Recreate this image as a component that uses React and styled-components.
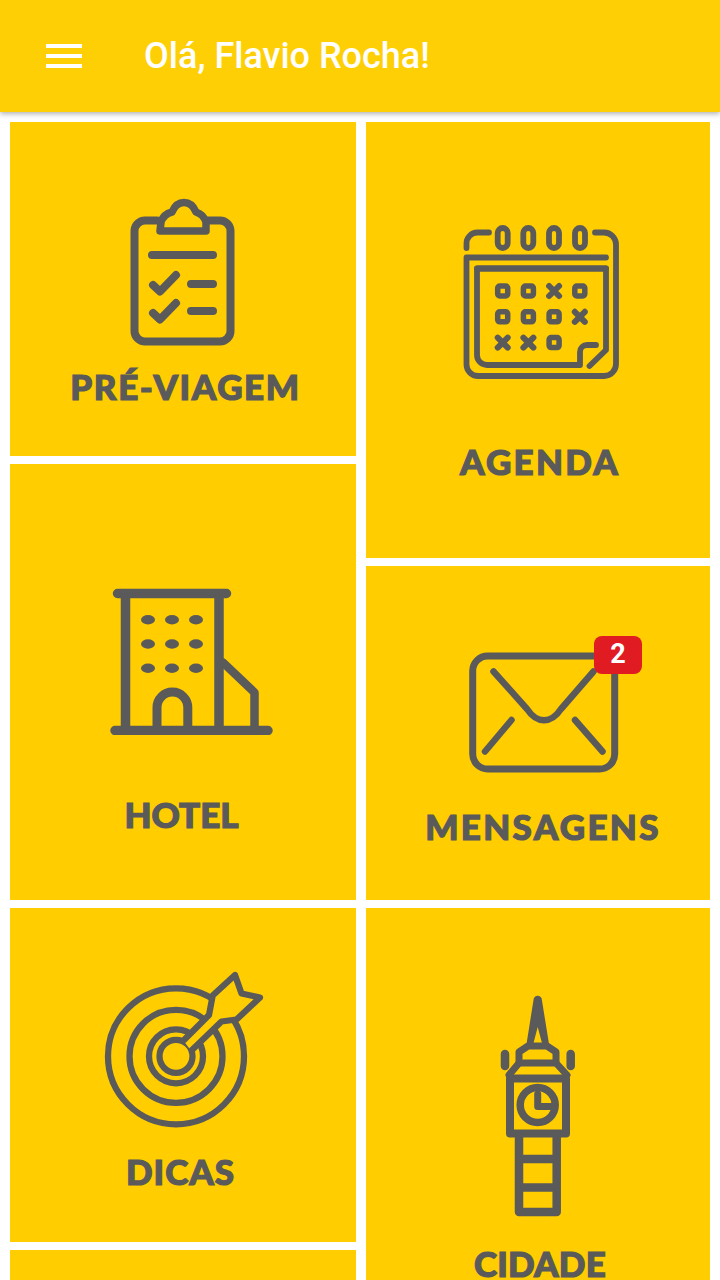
import React from "react";
import styled, { createGlobalStyle } from "styled-components";

const GlobalStyle = createGlobalStyle`
  html, body {
    margin: 0;
    background: #fff;
  }
`;

const Page = styled.div`
  width: 720px;
  height: 1280px;
  overflow: hidden;
  background: #fff;
`;

const Header = styled.header`
  position: relative;
  z-index: 1;
  display: flex;
  align-items: center;
  height: 112px;
  padding-left: 46px;
  background: #ffcf05;
  box-shadow: 0 2px 5px rgba(0, 0, 0, 0.3);
`;

const MenuButton = styled.div`
  display: flex;
  flex-direction: column;
  gap: 6px;
  width: 36px;
  margin-right: 62px;
`;

const MenuLine = styled.span`
  display: block;
  height: 4px;
  background: #fff;
`;

const Title = styled.h1`
  margin: 0;
  color: #fff;
  font-family: Roboto, sans-serif;
  font-size: 36px;
  font-weight: 500;
`;

const Grid = styled.main`
  display: grid;
  grid-template-columns: 346px 344px;
  column-gap: 10px;
  padding: 10px;
`;

const Column = styled.div`
  display: flex;
  flex-direction: column;
  gap: 8px;
`;

const Tile = styled.a`
  position: relative;
  display: block;
  box-sizing: border-box;
  flex: none;
  height: ${(p) => p.$height}px;
  padding-top: ${(p) => p.$pad}px;
  background: #ffcd00;
`;

const Icon = styled.svg`
  display: block;
  width: 100%;
  height: auto;
  fill: none;
  stroke: #5a5a5b;
  stroke-linecap: round;
  stroke-linejoin: round;
`;

const Label = styled.div`
  margin-top: ${(p) => p.$top}px;
  padding-left: ${(p) => p.$left || 0}px;
  padding-right: ${(p) => p.$right || 0}px;
  color: #5a5a5b;
  font-family: Lato, sans-serif;
  font-size: 35px;
  font-weight: 900;
  line-height: 1;
  letter-spacing: ${(p) => p.$track || 0}px;
  text-align: center;
  -webkit-text-stroke: 1.2px #5a5a5b;
`;

const Badge = styled.span`
  position: absolute;
  left: 228px;
  top: 70px;
  display: flex;
  align-items: center;
  justify-content: center;
  box-sizing: border-box;
  width: 48px;
  height: 38px;
  padding-bottom: 3px;
  border-radius: 8px;
  background: #e01b22;
  color: #fff;
  font-family: Roboto, sans-serif;
  font-size: 27px;
  font-weight: 700;
`;

const ClipboardIcon = () => (
  <Icon viewBox="10 190 346 165" strokeWidth="8">
    <path d="M157 220.500H145a10.500 10.500 0 0 0-10.500 10.500V331a10.500 10.500 0 0 0 10.500 10.500H220a10.500 10.500 0 0 0 10.500-10.500V231a10.500 10.500 0 0 0-10.500-10.500H209" />
    <path strokeWidth="7.500" d="M160 231H206V222C204 216 199 213 196 212C193 205 189 202.500 184 202.500C179 202.500 175 205 172 212C168 213 163 216 161 222Z" />
    <path d="M152 255H213M191 284H213M191 311H213" />
    <path strokeWidth="8" d="M153 285L160 291.500L176 275M153 313L160 319.500L176 303" />
  </Icon>
);

const calendarMarks = [
  ["s", "s", "x", "s"],
  ["s", "s", "s", "x"],
  ["x", "x", "s", null],
];

const CalendarIcon = () => (
  <Icon viewBox="366 220 344 165" strokeWidth="5.800">
    <path d="M489 232.500H478a11 11 0 0 0-11.500 11.500V248" />
    <path d="M595 232.500H604a12 12 0 0 1 12 12V364a12 12 0 0 1-12 12H478a11.500 11.500 0 0 1-11.500-11.500V257.500H606" />
    <path d="M477 268.500H606V350L589.500 366" />
    <path d="M606 268.500H477V355a10 10 0 0 0 10 10H580V352a7 7 0 0 1 7-7H596" />
    {[502.7, 528.3, 554, 580].map((x) => (
      <rect key={x} x={x - 5} y="228" width="10" height="20" rx="5" />
    ))}
    {calendarMarks.map((row, r) =>
      row.map((mark, c) => {
        const x = 502.7 + c * 25.7;
        const y = 291 + r * 25.8;
        if (mark === "s") {
          return <rect key={`${r}-${c}`} x={x - 5} y={y - 5} width="10" height="10" rx="2" strokeWidth="5.500" />;
        }
        if (mark === "x") {
          return <path key={`${r}-${c}`} strokeWidth="6" d={`M${x - 5} ${y - 5}L${x + 5} ${y + 5}M${x + 5} ${y - 5}L${x - 5} ${y + 5}`} />;
        }
        return null;
      })
    )}
  </Icon>
);

const HotelIcon = () => (
  <Icon viewBox="10 585 346 150" strokeWidth="9.500">
    <path d="M117.500 593.500H226.500M115 730.500H268M125.500 593.500V730M219 593.500V730" />
    <path strokeWidth="9" d="M157 730V707.500a15.400 15.400 0 0 1 30.800 0V730" />
    <path strokeWidth="8.500" d="M223 662.500L254.500 692.500V730" />
    {[619.7, 644, 668.3].map((y) =>
      [148, 172, 196].map((x) => (
        <ellipse key={`${x}-${y}`} cx={x} cy={y} rx="7" ry="4.700" fill="#5a5a5b" stroke="none" />
      ))
    )}
  </Icon>
);

const EnvelopeIcon = () => (
  <Icon viewBox="366 645 344 135" strokeWidth="7">
    <rect x="472.700" y="656" width="142" height="113" rx="15" />
    <path strokeWidth="6.500" d="M493.500 671.500L527 709C537 724 551 724 561 709L593.500 671.500" />
    <path strokeWidth="6.500" d="M511.500 720L485 751.500M575 720L602.500 751.500" />
  </Icon>
);

const TargetIcon = () => (
  <Icon viewBox="10 965 346 170" strokeWidth="6.300">
    <circle cx="176" cy="1056.300" r="68" />
    <circle cx="176" cy="1056.300" r="46.500" />
    <circle cx="176" cy="1056.300" r="27" />
    <circle cx="176" cy="1056.300" r="16.500" />
    <path
      stroke="none"
      fill="#ffcd00"
      d="M183 1040L192 1052L222 1022L237 1019L260 997L242 993L235 974L213 995L210 1012Z"
    />
    <path d="M184 1040L209 1015L212.700 995.500L235 975L241.500 993.500L260 997.500L236.500 1019.500L221.500 1021.500L192 1050" />
  </Icon>
);

const TowerIcon = () => (
  <Icon viewBox="366 992 344 228" strokeWidth="8">
    <path fill="#5a5a5b" stroke="none" fillRule="evenodd" d="M533.500 1000a4.200 4.200 0 0 1 8.400 0L549 1044H526.500ZM537.700 1027L533 1045H542.500Z" />
    <path strokeWidth="7" d="M528 1046H547L556 1052V1063H519V1052Z" />
    <path strokeWidth="7" d="M519 1063L509 1075M556 1063L567 1075" />
    <path d="M510 1078.500H566V1133.500H510Z" />
    <circle cx="537.700" cy="1105" r="17.500" strokeWidth="7.500" />
    <path strokeWidth="7" d="M537.700 1094V1106.500H551" />
    <path strokeWidth="8.500" d="M505 1054V1066M570.700 1054V1066" />
    <path strokeWidth="8.500" d="M519 1136V1212H556.700V1136M519 1159H556.700M519 1187.500H556.700" />
  </Icon>
);

function App() {
  return (
    <Page>
      <GlobalStyle />
      <Header>
        <MenuButton>
          <MenuLine />
          <MenuLine />
          <MenuLine />
        </MenuButton>
        <Title>Olá, Flavio Rocha!</Title>
      </Header>
      <Grid>
        <Column>
          <Tile $height={334} $pad={68}>
            <ClipboardIcon />
            <Label $top={14} $left={5} $track={1.6}>PRÉ-VIAGEM</Label>
          </Tile>
          <Tile $height={436} $pad={121}>
            <HotelIcon />
            <Label $top={62} $right={3}>HOTEL</Label>
          </Tile>
          <Tile $height={334} $pad={57}>
            <TargetIcon />
            <Label $top={19} $right={5} $track={1}>DICAS</Label>
          </Tile>
          <Tile $height={334} $pad={0} />
        </Column>
        <Column>
          <Tile $height={436} $pad={98}>
            <CalendarIcon />
            <Label $top={59} $left={4} $track={2.2}>AGENDA</Label>
          </Tile>
          <Tile $height={334} $pad={79}>
            <EnvelopeIcon />
            <Badge>2</Badge>
            <Label $top={29} $left={10} $track={2.3}>MENSAGENS</Label>
          </Tile>
          <Tile $height={434} $pad={84}>
            <TowerIcon />
            <Label $top={26} $left={4} $track={0.2}>CIDADE</Label>
          </Tile>
        </Column>
      </Grid>
    </Page>
  );
}

export default App;
